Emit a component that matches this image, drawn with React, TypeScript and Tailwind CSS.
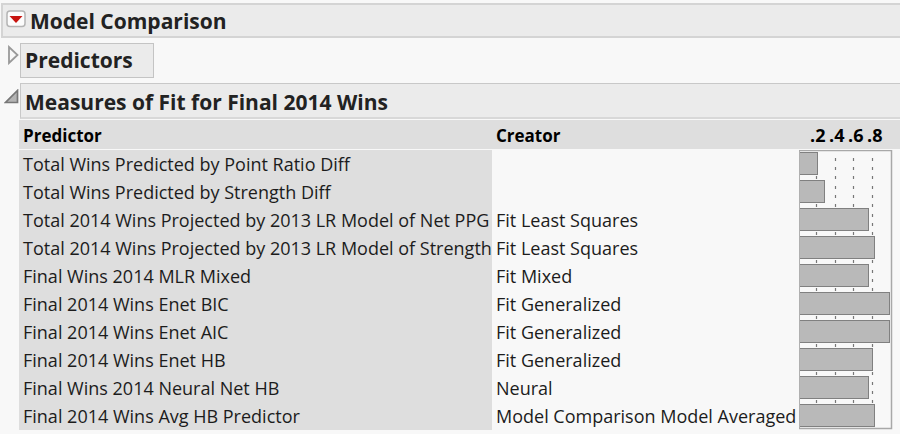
import React, { useState } from "react";

type Measure = {
  predictor: string;
  creator: string;
  value: number;
};

const measures: Measure[] = [
  { predictor: "Total Wins Predicted by Point Ratio Diff", creator: "", value: 19 },
  { predictor: "Total Wins Predicted by Strength Diff", creator: "", value: 26 },
  { predictor: "Total 2014 Wins Projected by 2013 LR Model of Net PPG", creator: "Fit Least Squares", value: 70 },
  { predictor: "Total 2014 Wins Projected by 2013 LR Model of Strength", creator: "Fit Least Squares", value: 76 },
  { predictor: "Final Wins 2014 MLR Mixed", creator: "Fit Mixed", value: 70 },
  { predictor: "Final 2014 Wins Enet BIC", creator: "Fit Generalized", value: 91 },
  { predictor: "Final 2014 Wins Enet AIC", creator: "Fit Generalized", value: 91 },
  { predictor: "Final 2014 Wins Enet HB", creator: "Fit Generalized", value: 74 },
  { predictor: "Final Wins 2014 Neural Net HB", creator: "Neural", value: 70 },
  { predictor: "Final 2014 Wins Avg HB Predictor", creator: "Model Comparison Model Averaged", value: 76 },
];

const ROW_HEIGHT = 28;

const MenuIcon = () => (
  <svg width="20" height="18" viewBox="0 0 20 18" aria-hidden="true">
    <rect x="1" y="1" width="18" height="15.5" rx="3" fill="#fcfcfc" stroke="#b4b4b4" strokeWidth="1.5" />
    <path d="M3.5 6H16.5L10 13Z" fill="#c8140f" />
  </svg>
);

const ClosedIcon = () => (
  <svg width="12" height="20" viewBox="0 0 12 20" aria-hidden="true">
    <path d="M2 2V18L10.5 10Z" fill="#f8f8f8" stroke="#999999" strokeWidth="1.8" />
  </svg>
);

const OpenIcon = () => (
  <svg width="15" height="15" viewBox="0 0 15 15" aria-hidden="true">
    <path d="M13.5 1.5V13.5H1.5Z" fill="#b4b4b4" stroke="#777777" strokeWidth="1.7" />
  </svg>
);

/* BAR CHART */
const BarChart = ({ rows }: { rows: Measure[] }) => {
  const height = rows.length * ROW_HEIGHT;

  return (
    <svg width="94" height={height} role="img" aria-label="Fit by model" className="block">
      {rows.map((row, index) => (
        <rect key={row.predictor} x="0.5" y={index * ROW_HEIGHT + 2.5} width={row.value - 1} height="22" fill="#b9b9b9" stroke="#808080" />
      ))}
      {/* dashed gridlines only show where no bar covers them */}
      {[17.5, 36.5, 54.5, 73.5].map((x) =>
        rows.map((row, index) => {
          const top = index * ROW_HEIGHT;
          return (
            <g key={`${x}-${row.predictor}`} stroke="#777777" strokeWidth="1.2">
              <path d={`M${x} ${top - 2}V${top + 1}`} />
              {row.value < x && <path d={`M${x} ${top + 8}V${top + 11}M${x} ${top + 17}V${top + 20}`} />}
            </g>
          );
        })
      )}
      <path d={`M0.5 ${height - 1}V0`} stroke="#b0b0b0" />
      <path d={`M0 0.5H92.5V${height - 1.5}H0`} fill="none" stroke="#a8a8a8" strokeWidth="1.5" />
    </svg>
  );
};

const App = () => {
  const [predictorsOpen, setPredictorsOpen] = useState(false);
  const [measuresOpen, setMeasuresOpen] = useState(true);

  return (
    <main className="min-h-screen bg-[#f8f8f8] pl-px pt-[3px] font-['Open_Sans','Noto_Sans',sans-serif] text-[#222222]">
      <header className="flex h-[35px] items-center gap-1 border-2 border-r-0 border-[#d4d4d4] bg-[#ebebeb] pl-[3px]">
        <button type="button" aria-label="Model Comparison menu" className="mb-1">
          <MenuIcon />
        </button>
        <h1 className="text-[21px] leading-7 font-bold">Model Comparison</h1>
      </header>

      <section className="mt-[5px] flex items-start">
        <button
          type="button"
          aria-label="Toggle Predictors"
          aria-expanded={predictorsOpen}
          onClick={() => setPredictorsOpen(!predictorsOpen)}
          className="flex w-[19px] justify-center pt-0.5 pl-1"
        >
          <ClosedIcon />
        </button>
        <h2 className="h-[35px] border border-[#c4c4c4] bg-[#ebebeb] pr-5 pl-1 text-[21px] leading-8 font-bold">Predictors</h2>
      </section>

      <section className="mt-[5px]">
        <div className="flex items-start">
          <button
            type="button"
            aria-label="Toggle Measures of Fit"
            aria-expanded={measuresOpen}
            onClick={() => setMeasuresOpen(!measuresOpen)}
            className="w-[19px] pt-[6px] pl-[3px]"
          >
            <OpenIcon />
          </button>
          <h2 className="h-[36px] flex-1 border border-r-0 border-b-2 border-[#c8c8c8] border-b-[#d8d8d8] bg-[#ebebeb] pl-1 text-[21px] leading-9 font-bold">
            Measures of Fit for Final 2014 Wins
          </h2>
        </div>

        {measuresOpen && (
          <div className="mt-px pl-[18px]">
            <table className="w-full border-separate border-spacing-0 text-left text-lg leading-7 text-black">
              <thead className="bg-[#dedede] text-[17px]">
                <tr className="h-[30px]">
                  <th className="w-[473px] border-b border-[#f8f8f8] pt-[3px] pr-0 pb-0 pl-1 leading-[26px] font-bold">Predictor</th>
                  <th className="w-[307px] border-b border-[#f8f8f8] pt-[3px] pr-0 pb-0 pl-1 leading-[26px] font-bold">Creator</th>
                  <th className="border-b border-[#f8f8f8] p-0 leading-[26px] font-bold">
                    <div className="flex pl-[11px] text-lg leading-[26px]">
                      {[".2", ".4", ".6", ".8"].map((tick) => (
                        <span key={tick} className="w-[19px]">{tick}</span>
                      ))}
                    </div>
                  </th>
                </tr>
              </thead>
              <tbody className="text-[#1c1c1c]">
                {measures.map((row, index) => (
                  <tr key={row.predictor} className="h-7">
                    <td className="bg-[#dedede] py-0 pr-0 pl-1 whitespace-nowrap">{row.predictor}</td>
                    <td className="py-0 pr-0 pl-1 whitespace-nowrap">{row.creator}</td>
                    {index === 0 && (
                      <td rowSpan={measures.length} className="p-0 align-top">
                        <BarChart rows={measures} />
                      </td>
                    )}
                  </tr>
                ))}
              </tbody>
            </table>
          </div>
        )}
      </section>
    </main>
  );
};

export default App;
